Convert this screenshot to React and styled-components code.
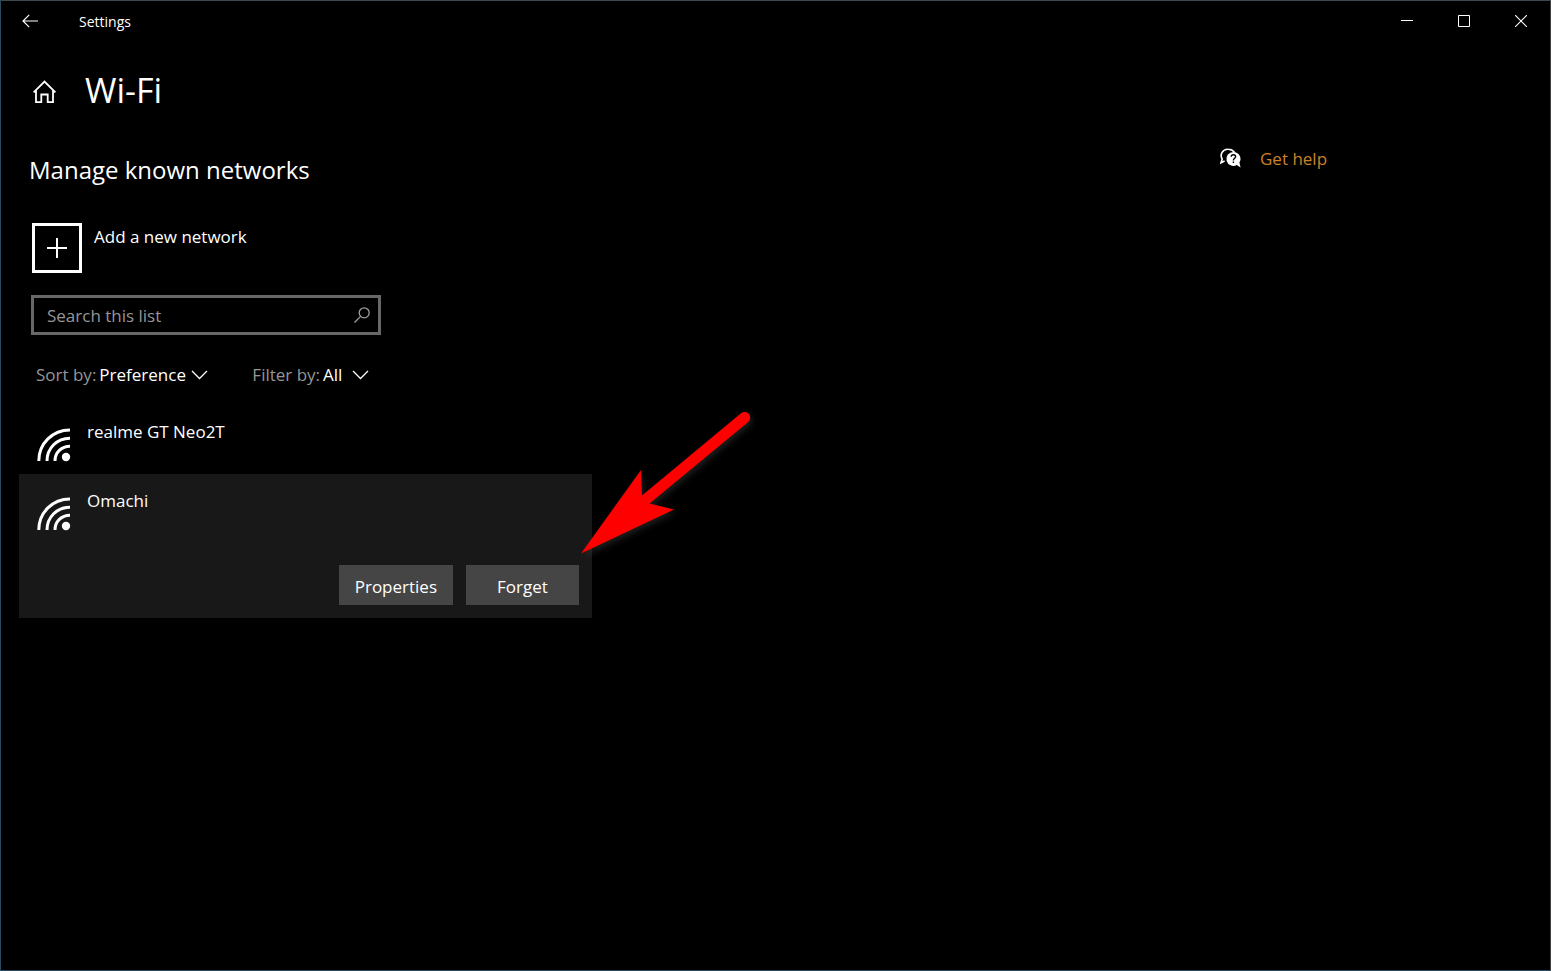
import React from "react";
import styled, { createGlobalStyle } from "styled-components";

const GlobalStyle = createGlobalStyle`
  * { box-sizing: border-box; }
  body {
    margin: 0;
    background: #000;
    color: #fff;
    font-family: "Segoe UI", "Open Sans", "Noto Sans", sans-serif;
    font-size: 17px;
    line-height: 24px;
  }
  button, input, select { font: inherit; color: inherit; }
  svg { display: block; flex: none; }
`;

const Window = styled.div`
  min-height: 100vh;
  border: 1px solid #284a5c;
  border-top-color: #3c4a50;
  border-right-color: #444;
`;

const TitleBar = styled.header`
  display: flex;
  align-items: center;
  height: 40px;
`;

const CaptionButton = styled.button`
  display: grid;
  place-items: center;
  width: ${(p) => p.$width || 57}px;
  height: 40px;
  padding: 0;
  border: 0;
  background: transparent;
`;

const AppName = styled.span`
  margin-left: 20px;
  padding-top: 2px;
  font-size: 14px;
  line-height: 20px;
`;

const CaptionControls = styled.div`
  display: flex;
  margin-left: auto;
  padding-right: 1px;
`;

const PageHeader = styled.div`
  display: flex;
  align-items: center;
  gap: 28px;
  padding: 24px 32px 0;
`;

const HomeLink = styled.a`
  display: block;
  padding-top: 3px;
  color: inherit;
`;

const PageTitle = styled.h1`
  margin: 0;
  font-size: 34px;
  line-height: 50px;
  font-weight: 400;
`;

const Content = styled.div`
  display: flex;
  justify-content: space-between;
  padding-top: 32px;
`;

const Main = styled.main`
  flex: 0 1 573px;
  margin-left: 18px;
`;

const Aside = styled.aside`
  flex: 0 0 330px;
`;

const HelpLink = styled.a`
  display: inline-flex;
  align-items: center;
  gap: 18px;
  color: #c9822b;
  text-decoration: none;
`;

const SectionTitle = styled.h2`
  margin: 0;
  padding: 7px 10px 0;
  font-size: 24px;
  line-height: 32px;
  font-weight: 400;
`;

const AddButton = styled.button`
  display: flex;
  align-items: flex-start;
  gap: 12px;
  margin: 37px 0 0 13px;
  padding: 0;
  border: 0;
  background: transparent;
  line-height: 28px;
`;

const PlusTile = styled.span`
  display: grid;
  place-items: center;
  width: 50px;
  height: 50px;
  border: 3px solid #fff;
`;

const SearchBox = styled.label`
  display: flex;
  align-items: center;
  width: 350px;
  height: 40px;
  margin: 22px 0 0 12px;
  padding: 0 8px 0 13px;
  border: 3px solid #686868;
`;

const SearchInput = styled.input`
  flex: 1;
  min-width: 0;
  padding: 2px 0 0;
  border: 0;
  outline: 0;
  background: transparent;
  &::placeholder { color: #969696; opacity: 1; }
`;

const Filters = styled.div`
  display: flex;
  gap: 44px;
  padding: 28px 17px 0;
`;

const FilterLabel = styled.label`
  display: flex;
  gap: 3px;
  color: #969696;
`;

const SelectFrame = styled.span`
  display: grid;
  align-items: center;
  width: ${(p) => p.$width}px;
  > * { grid-area: 1 / 1; }
  > svg { justify-self: end; pointer-events: none; }
`;

const Select = styled.select`
  appearance: none;
  width: 100%;
  height: 24px;
  padding: 0;
  border: 0;
  background: transparent;
  color: #fff;
`;

const NetworkList = styled.ul`
  margin: 18px 0 0;
  padding: 0;
  list-style: none;
`;

const NetworkItem = styled.li`
  position: relative;
  padding: 0 13px;
  background: ${(p) => (p.$selected ? "#181818" : "transparent")};
`;

const NetworkRow = styled.div`
  display: flex;
  align-items: flex-start;
  gap: 16px;
  height: ${(p) => (p.$selected ? 91 : 69)}px;
  padding: 15px 0 0 5px;
  > svg { margin-top: 8px; }
`;

const Actions = styled.div`
  display: flex;
  justify-content: flex-end;
  gap: 13px;
  padding-bottom: 13px;
`;

const ActionButton = styled.button`
  min-width: 113px;
  height: 40px;
  padding: 4px 16px 0;
  border: 0;
  background: #454545;
`;

const Pointer = styled.svg`
  position: absolute;
  top: -69px;
  left: calc(100% - 17px);
  pointer-events: none;
  filter: drop-shadow(2px 3px 3px rgba(90, 90, 90, 0.35));
`;

const Chevron = () => (
  <svg width="17" height="10" viewBox="0 0 17 10" fill="none" stroke="#fff" strokeWidth="1.3">
    <path d="M1 1l7.5 7.5L16 1" />
  </svg>
);

const WifiIcon = () => (
  <svg width="34" height="34" viewBox="0 0 34 34" fill="none" stroke="#fff" strokeWidth="3">
    <path d="M1.8 33C1.8 15.5 15.5 2 33 2M10 33C10 20 20 10.2 33 10.2M18 33C18 24.5 24.5 18.2 33 18.2" />
    <circle cx="29" cy="29" r="4.2" fill="#fff" stroke="none" />
  </svg>
);

const HelpIcon = () => (
  <svg width="22" height="22" viewBox="0 0 22 22" fill="none">
    <path d="M4.6 13L1 14.8L2.2 11A6.4 6.4 0 0 1 8 1.2C11 1.2 13.2 2.4 14.4 4.2" stroke="#fff" strokeWidth="1.6" />
    <path d="M13.4 3.9a7 7 0 1 0 3.4 13.1l3.8 2.4-1.2-4.8A7 7 0 0 0 13.4 3.9z" fill="#fff" />
    <path d="M11.2 8.8c0-1.4.9-2.1 2.2-2.1s2.2.8 2.2 2c0 1.6-2.2 1.7-2.2 3.8M13.4 13.5v1.6" stroke="#000" strokeWidth="1.4" />
  </svg>
);

function FilterSelect({ id, label, width, options }) {
  return (
    <FilterLabel htmlFor={id}>
      {label}
      <SelectFrame $width={width}>
        <Select id={id}>
          {options.map((o) => (
            <option key={o}>{o}</option>
          ))}
        </Select>
        <Chevron />
      </SelectFrame>
    </FilterLabel>
  );
}

export default function App() {
  return (
    <Window>
      <GlobalStyle />
      <TitleBar>
        <CaptionButton $width={58} aria-label="Back">
          <svg width="16" height="14" viewBox="0 0 16 14" fill="none" stroke="#fff" strokeWidth="1.2">
            <path d="M7.2 .8L1 7l6.2 6.2M1 7h15" />
          </svg>
        </CaptionButton>
        <AppName>Settings</AppName>
        <CaptionControls>
          <CaptionButton aria-label="Minimize">
            <svg width="12" height="12" viewBox="0 0 12 12"><path d="M0 5h12v1H0z" fill="#fff" /></svg>
          </CaptionButton>
          <CaptionButton aria-label="Maximize">
            <svg width="12" height="12" viewBox="0 0 12 12" fill="none" stroke="#fff"><path d="M.5.5h11v11H.5z" /></svg>
          </CaptionButton>
          <CaptionButton aria-label="Close">
            <svg width="12" height="12" viewBox="0 0 12 12" stroke="#fff" strokeWidth="1.1"><path d="M0 0l12 12M12 0L0 12" /></svg>
          </CaptionButton>
        </CaptionControls>
      </TitleBar>

      <PageHeader>
        <HomeLink href="#home" aria-label="Home">
          <svg width="24" height="24" viewBox="0 0 24 24" fill="none" stroke="#fff" strokeWidth="1.8">
            <path d="M.6 12.4L11.5 1.6l10.9 10.8M3 10.5v11.6h5.3v-7.6h6.4v7.6H20V10.5" />
          </svg>
        </HomeLink>
        <PageTitle>Wi-Fi</PageTitle>
      </PageHeader>

      <Content>
        <Main>
          <SectionTitle>Manage known networks</SectionTitle>
          <AddButton>
            <PlusTile>
              <svg width="20" height="20" viewBox="0 0 20 20" fill="#fff"><path d="M9 0h2v9h9v2h-9v9H9v-9H0V9h9z" /></svg>
            </PlusTile>
            Add a new network
          </AddButton>
          <SearchBox>
            <SearchInput type="text" placeholder="Search this list" aria-label="Search this list" />
            <svg width="16" height="16" viewBox="0 0 16 16" fill="none" stroke="#a0a0a0" strokeWidth="1.3">
              <circle cx="10.2" cy="5.8" r="5" />
              <path d="M6.6 9.4L.5 15.5" />
            </svg>
          </SearchBox>
          <Filters>
            <FilterSelect id="sort" label="Sort by:" width={109} options={["Preference", "Name"]} />
            <FilterSelect id="filter" label="Filter by:" width={46} options={["All"]} />
          </Filters>
          <NetworkList>
            <NetworkItem>
              <NetworkRow>
                <WifiIcon />
                realme GT Neo2T
              </NetworkRow>
            </NetworkItem>
            <NetworkItem $selected>
              <NetworkRow $selected>
                <WifiIcon />
                Omachi
              </NetworkRow>
              <Actions>
                <ActionButton>Properties</ActionButton>
                <ActionButton>Forget</ActionButton>
              </Actions>
              <Pointer width="190" height="160" viewBox="575 405 190 160" aria-hidden="true">
                <path
                  d="M581 553.5L641 470L642 495.5L741 413.3A5.6 5.6 0 0 1 748.2 421.9L649.5 503.5L674 509.5Z"
                  fill="#f00"
                />
              </Pointer>
            </NetworkItem>
          </NetworkList>
        </Main>
        <Aside>
          <HelpLink href="#help">
            <HelpIcon />
            Get help
          </HelpLink>
        </Aside>
      </Content>
    </Window>
  );
}
